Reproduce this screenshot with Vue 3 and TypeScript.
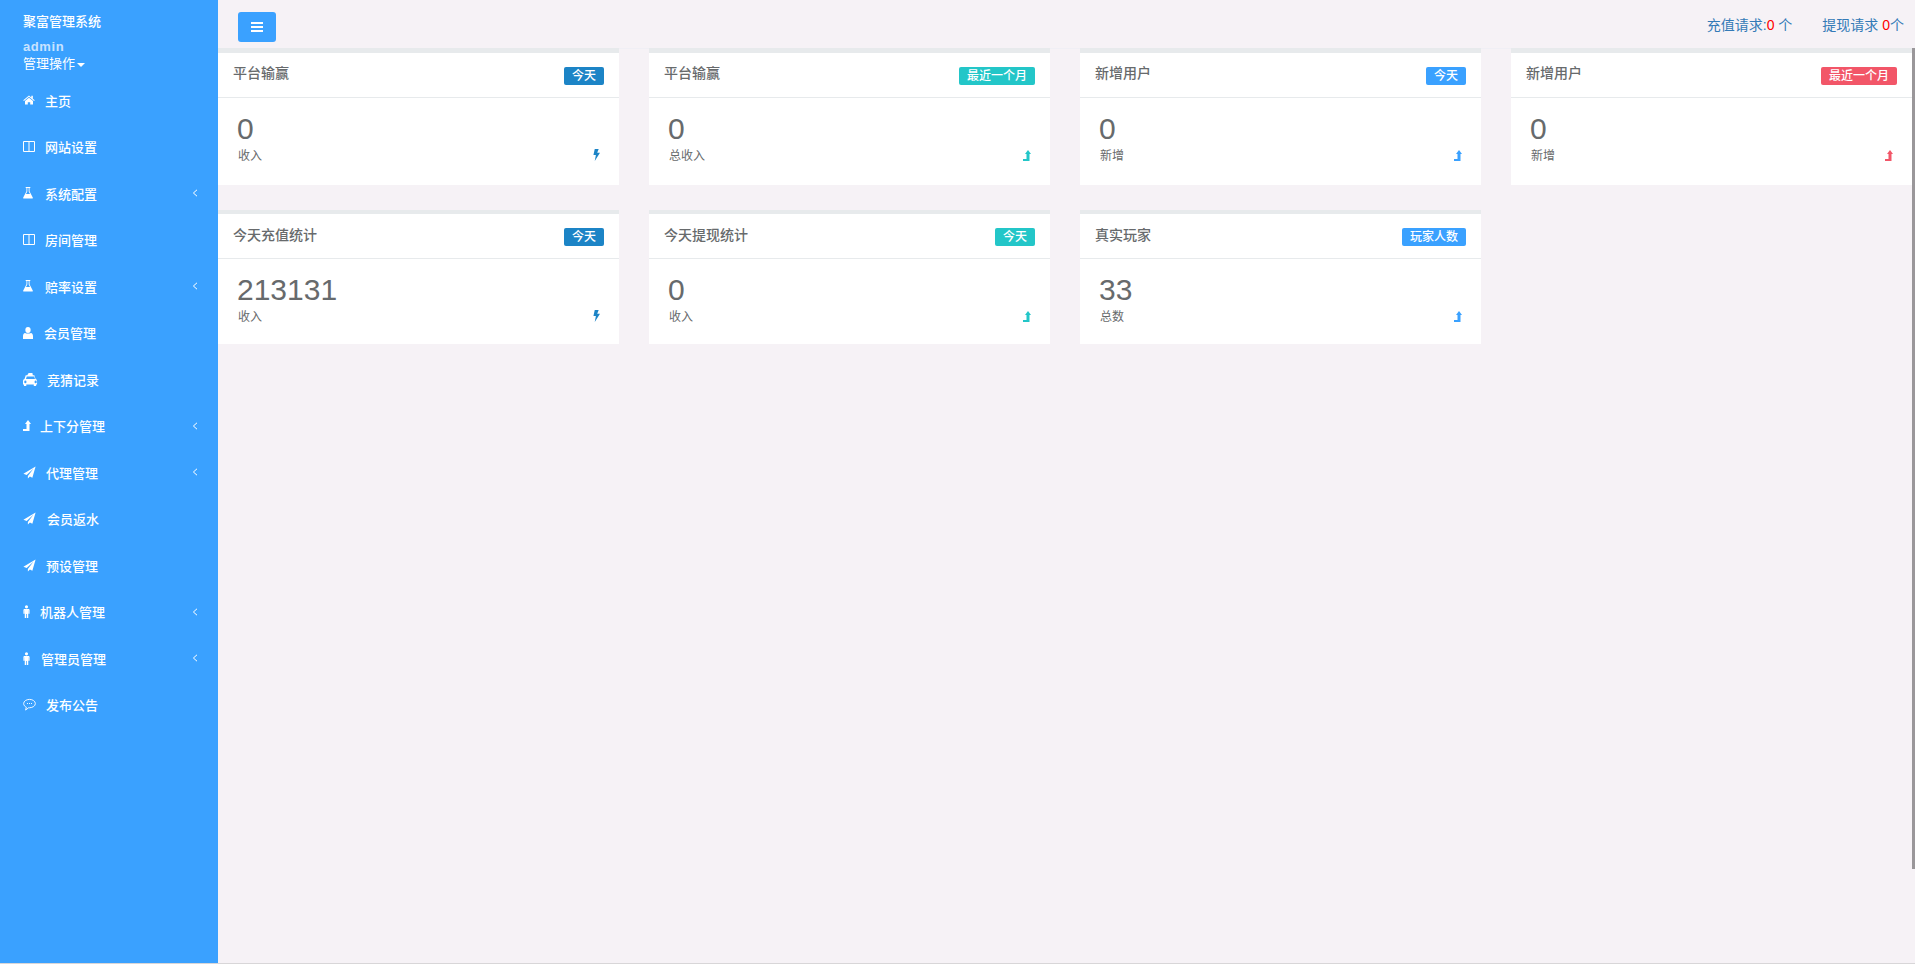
<script setup lang="ts">
interface NavItem { label: string; icon: string; gap: number; arrow?: boolean }
const nav: NavItem[] = [
  { label: '主页', icon: 'home', gap: 10 },
  { label: '网站设置', icon: 'columns', gap: 10 },
  { label: '系统配置', icon: 'flask', gap: 12, arrow: true },
  { label: '房间管理', icon: 'columns', gap: 10 },
  { label: '赔率设置', icon: 'flask', gap: 12, arrow: true },
  { label: '会员管理', icon: 'user', gap: 11 },
  { label: '竞猜记录', icon: 'taxi', gap: 9 },
  { label: '上下分管理', icon: 'level', gap: 9, arrow: true },
  { label: '代理管理', icon: 'plane', gap: 10, arrow: true },
  { label: '会员返水', icon: 'plane', gap: 11 },
  { label: '预设管理', icon: 'plane', gap: 10 },
  { label: '机器人管理', icon: 'male', gap: 10, arrow: true },
  { label: '管理员管理', icon: 'male', gap: 11, arrow: true },
  { label: '发布公告', icon: 'comment', gap: 10 },
]
interface IconSpec { w: number; h: number; box: string; d: string }
const icons: Record<string, IconSpec> = {
  home: { w: 12, h: 10, box: '0.5 2 15 12.500', d: 'M8 2.500 L.8 8.600l.9 1L8 4.300l6.300 5.300.9-1-2.400-2V3h-1.900v2L8 2.500zM3 9.600 8 5.400l5 4.200V14H9.500v-3h-3v3H3z' },
  user: { w: 10, h: 12, box: '2 1.500 12 13', d: 'M8 1.500a3.200 3.200 0 1 1 0 6.400 3.200 3.200 0 0 1 0-6.400zM4.600 8c1 .9 5.800.9 6.800 0 1.700.3 2.600 1.600 2.600 3.400v3.100H2v-3.100C2 9.600 2.900 8.300 4.600 8z' },
  flask: { w: 10, h: 12, box: '1.500 1.500 13 13.500', d: 'M5 1.500h6v1.200h-1v3.500l4.200 7.100c.3.6 0 1.200-.7 1.200H2.500c-.7 0-1-.6-.7-1.200L6 6.200V2.700H5zM7.100 2.700v3.800L5.400 9.500h5.200L8.900 6.500V2.700z' },
  taxi: { w: 15, h: 13, box: '0 1.500 16 12', d: 'M6 1.500h4l.5 2h1.600l1.300 3.500c1 .3 1.600 1 1.600 2v3h-1v1.500h-2.500V12H3.500v1.500H1V12H0V9c0-1 .6-1.700 1.600-2l1.300-3.500h1.600zM4 4.700 3.200 7h9.600L12 4.700zM2.500 8.500a1.200 1.200 0 1 0 0 2.400 1.200 1.200 0 0 0 0-2.400zm11 0a1.200 1.200 0 1 0 0 2.400 1.200 1.200 0 0 0 0-2.400z' },
  level: { w: 8, h: 11, box: '0 0 8 11', d: 'M0 11V9h3.500V4H2L5 0l3 4H6.500v7z' },
  plane: { w: 13, h: 13, box: '0 .5 16 15', d: 'M15.500 1 .5 9.500l4 1.500L13 3.500 6 12v3l2.500-2.500 3 1.500z' },
  male: { w: 7, h: 13, box: '4 .5 8 15', d: 'M8 .8a1.800 1.800 0 1 1 0 3.600A1.800 1.800 0 0 1 8 .8zM5.800 5h4.400c.8 0 1.300.5 1.300 1.300v4.200h-1.300v-4H10v9H8.400V11h-.8v4.500H6v-9h-.2v4H4.500V6.300C4.500 5.500 5 5 5.800 5z' },
  bolt: { w: 7, h: 12, box: '4 1 8 14', d: 'M6 1h4.500L8.800 5.500H12L6 15l1.300-7H4.500z' },
}
interface Card { title: string; badge: string; color: string; value: string; label: string; icon: string }
const cards: Card[] = [
  { title: '平台输赢', badge: '今天', color: '#1c84c6', value: '0', label: '收入', icon: 'bolt' },
  { title: '平台输赢', badge: '最近一个月', color: '#23c6c8', value: '0', label: '总收入', icon: 'level' },
  { title: '新增用户', badge: '今天', color: '#3aa1ff', value: '0', label: '新增', icon: 'level' },
  { title: '新增用户', badge: '最近一个月', color: '#f25668', value: '0', label: '新增', icon: 'level' },
  { title: '今天充值统计', badge: '今天', color: '#1c84c6', value: '213131', label: '收入', icon: 'bolt' },
  { title: '今天提现统计', badge: '今天', color: '#23c6c8', value: '0', label: '收入', icon: 'level' },
  { title: '真实玩家', badge: '玩家人数', color: '#3aa1ff', value: '33', label: '总数', icon: 'level' },
]
const slot = (name: string): number => (name === 'columns' || name === 'comment' ? (name === 'columns' ? 12 : 13) : icons[name].w)
</script>

<template>
  <div class="page">
    <aside class="side">
      <div class="brand">聚富管理系统</div>
      <div class="admin">admin</div>
      <div class="ops">管理操作<span class="caret"></span></div>
      <ul class="nav">
        <li v-for="item in nav" :key="item.label" class="nav-item">
          <span class="nav-icon" :style="{ width: slot(item.icon) + 'px', marginRight: item.gap + 'px' }">
            <svg v-if="item.icon === 'columns'" viewBox="0 0 12 11" width="12" height="11"><path d="M.5.500h11v10H.5zM6 .5v10" fill="none" stroke="#fff" stroke-width="1" /></svg>
            <svg v-else-if="item.icon === 'comment'" viewBox="0 0 14 14" width="13" height="13"><path d="M7 1.500c3.300 0 6.300 1.900 6.300 4.500S10.300 10.500 7 10.500h-1L2.800 13l.8-3.100C1.900 9.100.7 7.700.7 6 .7 3.400 3.700 1.500 7 1.500z" fill="none" stroke="#fff" /><path d="M4.300 5.500h1v1h-1zM6.500 5.500h1v1h-1zM8.700 5.500h1v1h-1z" fill="#fff" /></svg>
            <svg v-else :viewBox="icons[item.icon].box" :width="icons[item.icon].w" :height="icons[item.icon].h" preserveAspectRatio="none"><path :d="icons[item.icon].d" fill="#fff" fill-rule="evenodd" /></svg>
          </span>
          <span class="nav-text">{{ item.label }}</span>
          <svg v-if="item.arrow" class="chev" viewBox="0 0 6 8" width="6" height="8"><path d="M5 .8 1.400 4 5 7.200" fill="none" stroke="#fff" stroke-width="1" /></svg>
        </li>
      </ul>
    </aside>
    <main class="main">
      <header class="top">
        <button class="menu" type="button" aria-label="menu"><span></span><span></span><span></span></button>
        <div class="requests">
          <a>充值请求:<b>0</b> 个</a>
          <a>提现请求 <b>0</b>个</a>
        </div>
      </header>
      <section class="grid">
        <article v-for="(card, i) in cards" :key="i" class="card">
          <div class="card-head">
            <h5>{{ card.title }}</h5>
            <span class="badge" :style="{ background: card.color }">{{ card.badge }}</span>
          </div>
          <div class="card-body">
            <div class="value">{{ card.value }}</div>
            <div class="foot">
              <small>{{ card.label }}</small>
              <svg :viewBox="icons[card.icon].box" :width="icons[card.icon].w" :height="icons[card.icon].h" preserveAspectRatio="none"><path :d="icons[card.icon].d" :fill="card.color" /></svg>
            </div>
          </div>
        </article>
      </section>
      <div class="scroll"></div>
    </main>
  </div>
</template>

<style>
html, body { margin: 0; overflow: hidden; }
</style>

<style scoped>
.page {
  display: flex;
  height: 963px;
  border-bottom: 1px solid #d8d6d8;
  background: #f6f2f6;
  font-family: "Liberation Sans", "Noto Sans CJK SC", sans-serif;
  color: #676a6c;
  overflow: hidden;
}
.side {
  width: 218px;
  flex: none;
  background: #3aa1ff;
  color: #fff;
  box-sizing: border-box;
  padding-top: 14px;
}
.brand {
  margin-left: 23px;
  font-size: 13px;
  line-height: 16px;
  font-weight: 500;
}
.admin {
  margin: 9px 0 0 23px;
  font-size: 13px;
  line-height: 16px;
  font-weight: 700;
  letter-spacing: 0.6px;
  color: #c8e3ff;
}
.ops {
  margin-left: 23px;
  font-size: 13px;
  line-height: 17px;
  display: flex;
  align-items: center;
}
.caret {
  margin: 2px 0 0 2px;
  border-top: 4px solid #fff;
  border-left: 4px solid transparent;
  border-right: 4px solid transparent;
}
.nav {
  list-style: none;
  margin: 5px 0 0;
  padding: 0;
}
.nav-item {
  height: 46.5px;
  display: flex;
  align-items: center;
  padding-left: 23px;
  padding-right: 20px;
  font-size: 13px;
  font-weight: 500;
}
.nav-icon {
  display: flex;
  justify-content: center;
  flex: none;
}
.nav-text { flex: 1; }
.chev { flex: none; }
.main {
  flex: 1;
  min-width: 0;
  position: relative;
}
.top {
  height: 36px;
  box-shadow: 0 1px 0 #f0eff5;
  display: flex;
  align-items: flex-start;
  justify-content: space-between;
  padding: 12px 11px 0 20px;
}
.menu {
  width: 38px;
  height: 30px;
  padding: 0;
  border: 0;
  border-radius: 3px;
  background: #3aa1ff;
  display: flex;
  flex-direction: column;
  align-items: center;
  justify-content: center;
  gap: 2px;
}
.menu span {
  width: 12px;
  height: 2px;
  background: #fff;
}
.requests {
  display: flex;
  gap: 30px;
  font-size: 14px;
  line-height: 26px;
  color: #337ab7;
}
.requests b {
  font-weight: 400;
  color: #f00;
}
.grid {
  display: grid;
  grid-template-columns: repeat(4, 401px);
  column-gap: 30px;
  row-gap: 25px;
}
.card {
  background: #fff;
  border-top: 5px solid #e7eaec;
}
.card-head {
  height: 44px;
  border-bottom: 1px solid #e7eaec;
  display: flex;
  align-items: flex-start;
  justify-content: space-between;
  padding: 0 15px;
}
.card-head h5 {
  margin: 11px 0 0;
  font-size: 14px;
  line-height: 18px;
  font-weight: 500;
}
.badge {
  margin-top: 14px;
  height: 18px;
  line-height: 18px;
  padding: 0 8px;
  border-radius: 2px;
  color: #fff;
  font-size: 12px;
  font-weight: 500;
}
.card-body {
  padding: 14px 15px 0 20px;
  height: 73px;
}
.value {
  margin-left: -1px;
  font-size: 30px;
  line-height: 34px;
}
.foot {
  display: flex;
  align-items: center;
  justify-content: space-between;
  margin-top: 2px;
}
.foot small {
  font-size: 12px;
  line-height: 16px;
}
.foot svg { margin: 0 4px 2px 0; }
.grid .card:nth-child(n + 5) { border-top-width: 4px; }
.grid .card:nth-child(n + 5) h5 { margin-top: 12px; }
.grid .card:nth-child(n + 5) .card-body { height: 72px; padding-top: 14px; height: 71px; }
.scroll {
  position: absolute;
  right: 0;
  top: 48px;
  width: 3px;
  height: 821px;
  background: #9a979a;
}
</style>
